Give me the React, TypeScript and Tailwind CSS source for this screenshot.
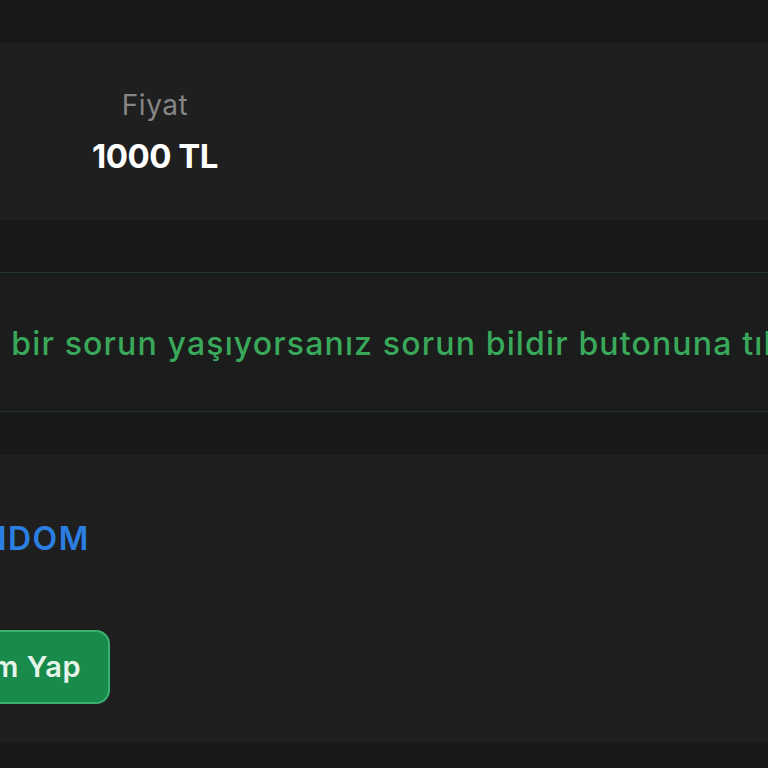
import React from 'react';

export default function App() {
  return (
    <div className="w-[768px] h-[768px] overflow-hidden bg-[#19191a] font-['Inter',sans-serif]">
      <div className="h-[43px]" />

      {/* Fiyat kartı */}
      <section className="h-[177px] bg-[#1f1f1f] flex items-center">
        <div className="ml-[93px] w-[124px] flex flex-col items-center pb-[2px]">
          <span className="text-[28px] leading-[32px] tracking-[0.5px] text-[#858585]">Fiyat</span>
          <span className="mt-[18px] text-[33px] leading-[34px] font-bold tracking-[-0.5px] text-white whitespace-nowrap">1000 TL</span>
        </div>
      </section>

      <div className="h-[52px]" />

      {/* Bilgi notu */}
      <section className="h-[140px] bg-[#1a1d1b] border-y border-[#22362a] flex items-center overflow-hidden">
        <p className="whitespace-nowrap -ml-[143px] mt-[4px] text-[32px] leading-[36px] font-medium tracking-[1.15px] text-[#3aa85a]">
          herhangi bir sorun yaşıyorsanız sorun bildir butonuna tıklayınız.
        </p>
      </section>

      <div className="h-[43px]" />

      {/* Ödeme */}
      <section className="h-[287px] bg-[#1f1f1f] flex flex-col overflow-hidden">
        <div className="h-[66px]" />
        <span className="whitespace-nowrap -ml-[65px] text-[32px] leading-[36px] font-semibold tracking-[1.5px] text-[#2b7fe3]">RANDOM</span>
        <div className="h-[73px]" />
        <button className="-ml-[160px] w-[270px] h-[74px] rounded-[14px] border-2 border-[#3ab26e] bg-[#188a4c] flex items-center justify-end pr-[27px] text-[29px] font-semibold tracking-[0.5px] text-[#e6f5ea] whitespace-nowrap">
          Satın Alım Yap
        </button>
      </section>
    </div>
  );
}
